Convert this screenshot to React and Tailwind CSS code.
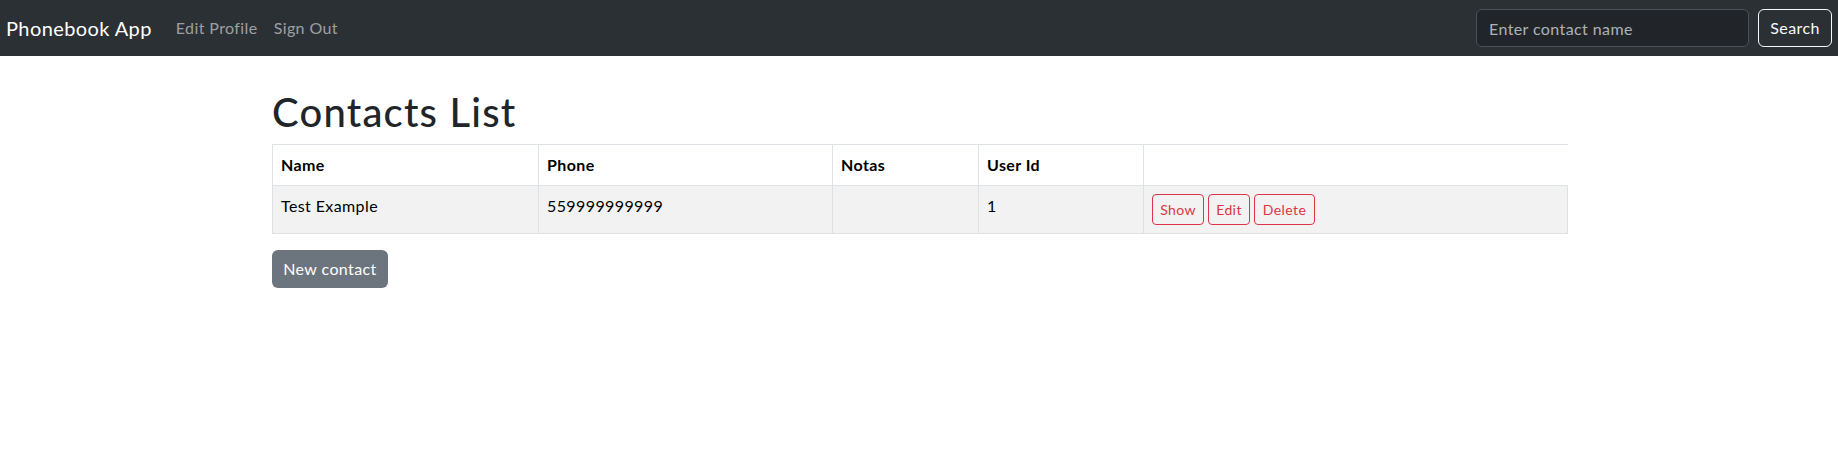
import React, { useState } from "react";

const contacts = [
  { id: 1, name: "Test Example", phone: "559999999999", notes: "", userId: 1 },
];

const Navbar = () => {
  const [query, setQuery] = useState("");

  return (
    <nav className="h-14 bg-[#2b3035] flex items-center px-[6px]">
      <a href="#" className="text-[20px] leading-[30px] text-white mr-4">
        Phonebook App
      </a>
      <div className="flex items-center">
        <a href="#" className="px-2 text-[rgba(255,255,255,0.55)]">
          Edit Profile
        </a>
        <a href="#" className="px-2 text-[rgba(255,255,255,0.55)]">
          Sign Out
        </a>
      </div>
      <form className="ml-auto flex items-center gap-[9px]" onSubmit={(e) => e.preventDefault()}>
        <input
          type="search"
          value={query}
          onChange={(e) => setQuery(e.target.value)}
          placeholder="Enter contact name"
          className="w-[273px] h-[38px] px-3 rounded-md bg-[#212529] border border-[#495057] text-[#dee2e6] placeholder:text-[rgba(222,226,230,0.75)] outline-none"
        />
        <button className="h-[38px] w-[74px] rounded-md border border-[#f8f9fa] text-[#f8f9fa]">
          Search
        </button>
      </form>
    </nav>
  );
};

const OutlineButton = ({ label, width }) => (
  <button
    className={`h-[31px] ${width} rounded border border-[#dc3545] text-[#dc3545] text-[14px] text-center`}
  >
    {label}
  </button>
);

export default function App() {
  return (
    <div className="min-h-screen bg-white text-[#212529] text-[16px] leading-6 tracking-[0.025em] font-['Lato','Liberation_Sans',sans-serif]">
      <Navbar />
      <main className="w-[1320px] mx-auto pl-[13px] pr-[11px] pt-8">
        <h1 className="text-[40px] leading-[48px] font-medium tracking-[0.03em] mb-2">Contacts List</h1>

        <table className="w-full table-fixed border-collapse text-black mb-4">
          <colgroup>
            <col className="w-[266px]" />
            <col className="w-[294px]" />
            <col className="w-[146px]" />
            <col className="w-[165px]" />
            <col />
          </colgroup>
          <thead>
            <tr className="border-y border-[#dee2e6]">
              <th className="border-x border-[#dee2e6] p-2 text-left font-bold align-bottom">Name</th>
              <th className="border-x border-[#dee2e6] p-2 text-left font-bold align-bottom">Phone</th>
              <th className="border-x border-[#dee2e6] p-2 text-left font-bold align-bottom">Notas</th>
              <th className="border-x border-[#dee2e6] p-2 text-left font-bold align-bottom">User Id</th>
            </tr>
          </thead>
          <tbody>
            {contacts.map((c) => (
              <tr key={c.id} className="border-y border-[#dee2e6] bg-[#f2f2f2]">
                <td className="border-x border-[#dee2e6] p-2 align-top">{c.name}</td>
                <td className="border-x border-[#dee2e6] p-2 align-top">{c.phone}</td>
                <td className="border-x border-[#dee2e6] p-2 align-top">{c.notes}</td>
                <td className="border-x border-[#dee2e6] p-2 align-top">{c.userId}</td>
                <td className="border-x border-[#dee2e6] p-2 align-top">
                  <div className="flex gap-[4px]">
                    <OutlineButton label="Show" width="w-[52px]" />
                    <OutlineButton label="Edit" width="w-[42px]" />
                    <OutlineButton label="Delete" width="w-[61px]" />
                  </div>
                </td>
              </tr>
            ))}
          </tbody>
        </table>

        <button className="h-[38px] w-[116px] rounded-md bg-[#6c757d] text-white">
          New contact
        </button>
      </main>
    </div>
  );
}
